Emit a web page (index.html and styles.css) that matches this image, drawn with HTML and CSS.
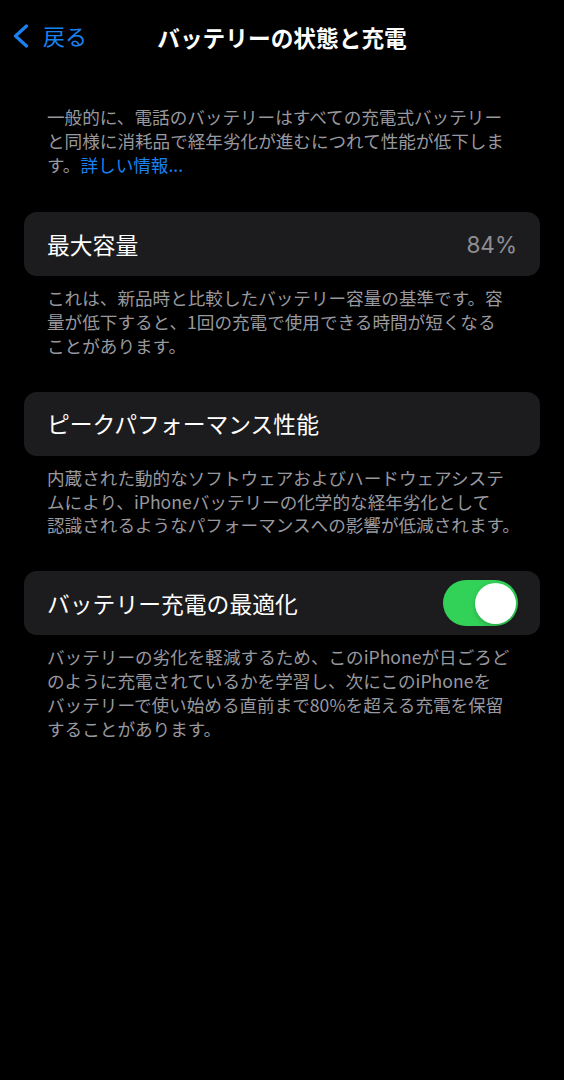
FILE: index.html
```html
<!DOCTYPE html>
<html lang="ja">
<head>
<meta charset="utf-8">
<title>バッテリーの状態と充電</title>
<link rel="stylesheet" href="styles.css">
</head>
<body>
<header class="navbar">
  <div class="nav-left">
    <a class="back">
      <svg class="chevron" width="18" height="24" viewBox="0 0 18 24" aria-hidden="true">
        <polyline points="14.5,2 3.5,12 14.5,22" fill="none" stroke="#1a82f0" stroke-width="3.2" stroke-linecap="round" stroke-linejoin="round"/>
      </svg>
      <span>戻る</span>
    </a>
  </div>
  <h1 class="title">バッテリーの状態と充電</h1>
  <div class="nav-right"></div>
</header>

<main class="content">
  <p class="intro">一般的に、電話のバッテリーはすべての充電式バッテリー<br>と同様に消耗品で経年劣化が進むにつれて性能が低下しま<br>す。<a class="link">詳しい情報...</a></p>

  <section class="group">
    <div class="card">
      <span class="label">最大容量</span>
      <span class="value">84%</span>
    </div>
    <p class="footer">これは、新品時と比較したバッテリー容量の基準です。容<br>量が低下すると、1回の充電で使用できる時間が短くなる<br>ことがあります。</p>
  </section>

  <section class="group">
    <div class="card">
      <span class="label">ピークパフォーマンス性能</span>
    </div>
    <p class="footer">内蔵された動的なソフトウェアおよびハードウェアシステ<br>ムにより、iPhoneバッテリーの化学的な経年劣化として<br>認識されるようなパフォーマンスへの影響が低減されます。</p>
  </section>

  <section class="group">
    <div class="card">
      <span class="label">バッテリー充電の最適化</span>
      <span class="toggle on"><span class="knob"></span></span>
    </div>
    <p class="footer">バッテリーの劣化を軽減するため、このiPhoneが日ごろど<br>のように充電されているかを学習し、次にこのiPhoneを<br>バッテリーで使い始める直前まで80%を超える充電を保留<br>することがあります。</p>
  </section>
</main>
</body>
</html>
```

FILE: styles.css
```css
html, body {
  margin: 0;
  padding: 0;
  background: #000;
}

body {
  font-family: "Noto Sans CJK JP", "Noto Sans", sans-serif;
  color: #fff;
  width: 564px;
  min-height: 1080px;
}

.navbar {
  height: 74px;
  display: grid;
  grid-template-columns: 1fr auto 1fr;
  align-items: center;
}

.nav-left {
  padding-left: 12px;
}

.back {
  display: inline-flex;
  align-items: center;
  gap: 13px;
  color: #1a82f0;
  font-size: 22px;
  line-height: 1;
}

.chevron {
  display: block;
  margin-top: 2px;
}

.title {
  margin: 0;
  font-size: 22.7px;
  font-weight: 700;
  color: #fff;
  white-space: nowrap;
}

.content {
  padding-top: 31px;
}

.intro {
  margin: 0 0 36px;
  padding: 0 10px 0 47px;
  font-size: 17.6px;
  line-height: 23.8px;
  color: #98989f;
  white-space: nowrap;
}

.link {
  color: #1a82f0;
}

.group {
  margin-bottom: 34px;
}

.card {
  margin: 0 24px;
  height: 64px;
  border-radius: 13px;
  background: #1c1c1e;
  display: flex;
  align-items: center;
  justify-content: space-between;
  padding: 0 22px 0 23px;
}

.label {
  font-size: 22.8px;
  color: #fff;
  white-space: nowrap;
}

.value {
  font-size: 22.5px;
  color: #8e8e93;
  font-family: "Inter", "Noto Sans", sans-serif;
  font-weight: 400;
  margin-right: 1px;
}

.footer {
  margin: 0;
  padding: 10px 10px 0 47px;
  font-size: 17.6px;
  line-height: 23.8px;
  color: #98989f;
  white-space: nowrap;
}

.toggle {
  position: relative;
  width: 75px;
  height: 46px;
  border-radius: 23px;
  background: #32d158;
  flex: none;
}

.knob {
  position: absolute;
  top: 2.5px;
  right: 2.5px;
  width: 41px;
  height: 41px;
  border-radius: 50%;
  background: #fff;
  box-shadow: 0 2px 5px rgba(0, 0, 0, 0.2);
}
```
